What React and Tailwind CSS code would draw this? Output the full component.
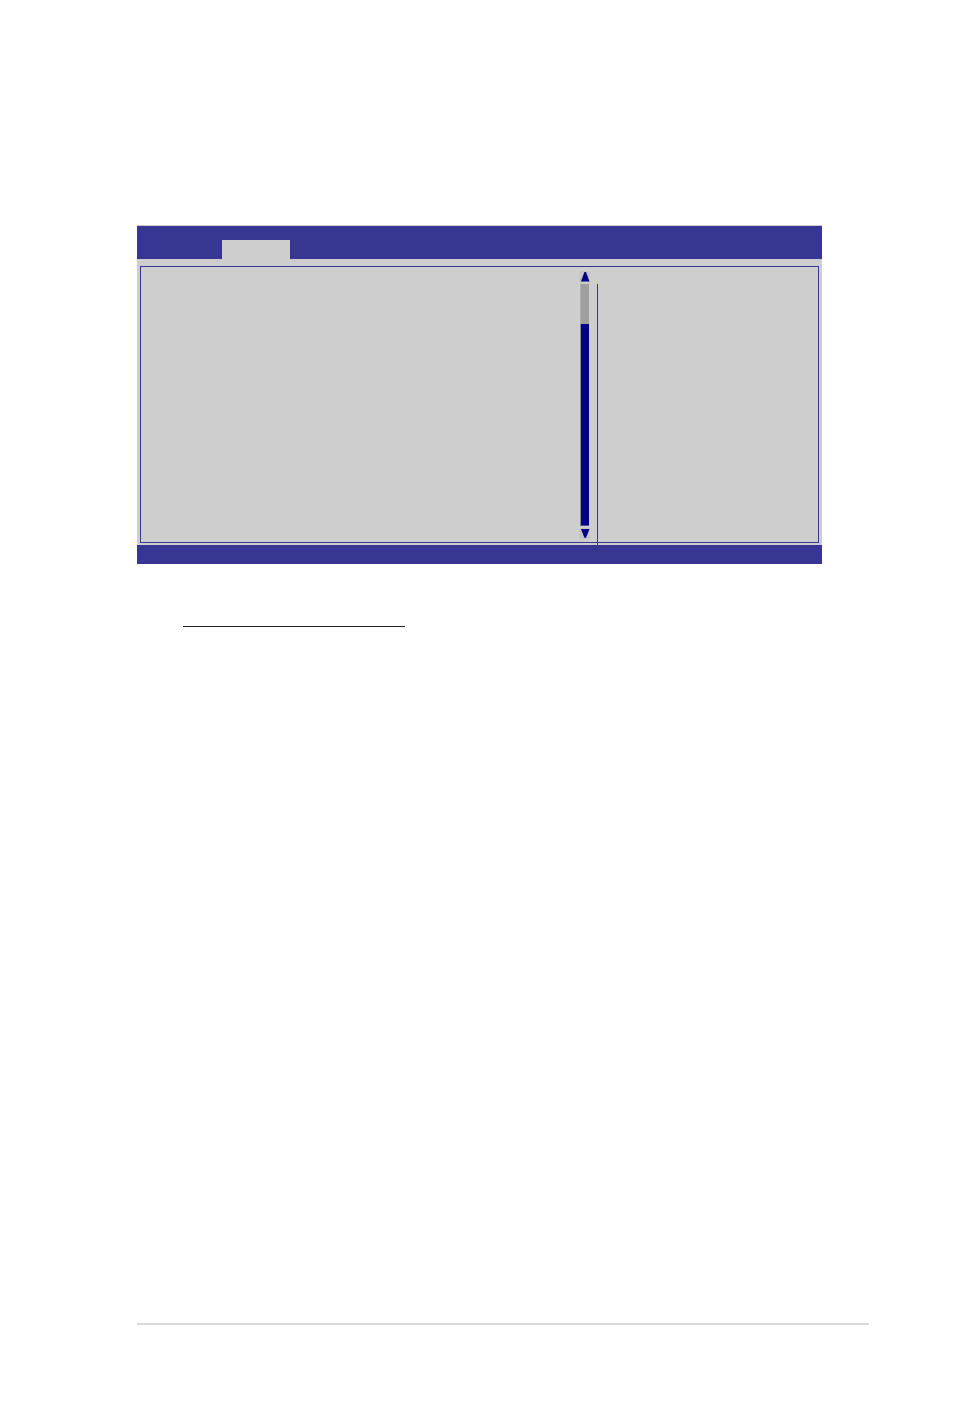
function ArrowButton({ label, points }) {
  return (
    <button type="button" aria-label={label} className="block h-[11px] w-[11px] bg-[#c5c5c5]">
      <svg viewBox="0 0 11 11" className="block h-[11px] w-[11px]" aria-hidden="true">
        <polygon points={points} fill="#000084" />
      </svg>
    </button>
  );
}

function ScrollBar() {
  return (
    <div className="mt-1 mb-[3px] mr-[7px] flex w-[11px] flex-col">
      <ArrowButton label="Scroll up" points="5.4,1 7,1 10.5,10.4 2,10.4" />
      <div className="mx-px my-[2px] flex flex-1 flex-col">
        <div className="h-10 border-l border-[#b0b0b0] bg-[#9f9f9f]" />
        <div className="flex-1 border-b border-l border-b-[#55558b] border-l-[#8585a0] bg-[#000084]" />
      </div>
      <ArrowButton label="Scroll down" points="2,1 10.5,1 7,9.8 5.4,9.8" />
    </div>
  );
}

export default function App() {
  return (
    <main className="flex min-h-screen flex-col bg-white pt-[225px] pr-[85px] pb-[92px] pl-[137px]">
      <section className="mr-[47px] flex flex-col border-t border-[#cecece] bg-[#cecece]">
        <header className="flex h-[33px] items-end bg-[#373793] pl-[85px]">
          <div className="h-[19px] w-[68px] bg-[#cecece]" />
        </header>
        <div className="px-[3px] pt-[7px] pb-[2px]">
          <div className="flex h-[277px] border border-[#373793]">
            <div className="flex-1" />
            <ScrollBar />
            <aside className="mt-[17px] -mb-[3px] w-[221px] border-l border-[#373793]" />
          </div>
        </div>
        <footer className="h-[19px] bg-[#373793]" />
      </section>
      <hr className="mt-[62px] ml-[46px] w-[222px] border-t border-[#231f20]" />
      <hr className="mt-auto border-t-2 border-[#d9d9d9]" />
    </main>
  );
}
